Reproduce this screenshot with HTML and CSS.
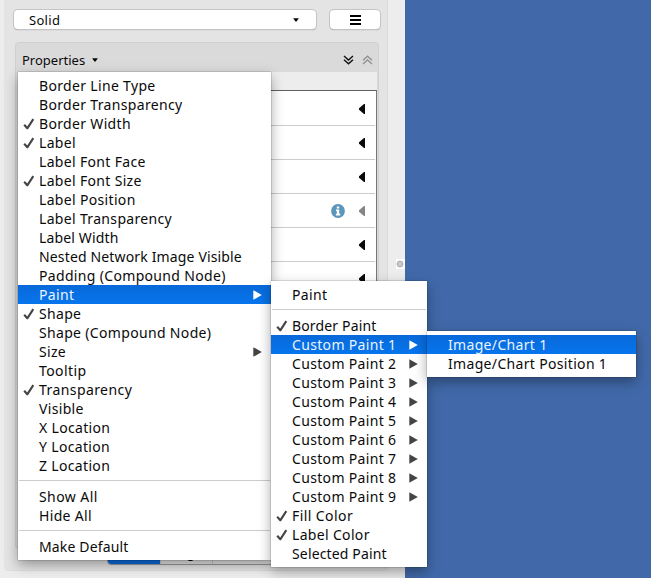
FILE: index.html
```
<!DOCTYPE html>
<html lang="en">
<head>
<meta charset="utf-8">
<title>Style properties</title>
<link rel="stylesheet" href="styles.css">
</head>
<body>
<svg class="defs" width="0" height="0">
  <symbol id="check" viewBox="0 0 12 12"><path d="M1.2 6.8 4.3 10.3 10.3 1.2" fill="none" stroke="currentColor" stroke-width="2.1" stroke-linejoin="round"/></symbol>
  <symbol id="right" viewBox="0 0 9 10"><path d="M.3.2 8.8 5 .3 9.8z" fill="currentColor"/></symbol>
  <symbol id="left" viewBox="0 0 6 10"><path d="M6 0V10H5L0 5.7V4.3L5 0z" fill="currentColor"/></symbol>
  <symbol id="down" viewBox="0 0 6 4"><path d="M.2.2H5.8L3.6 3.6H2.4z" fill="currentColor"/></symbol>
</svg>
<div class="app">
  <div class="side">
    <div class="panel">
      <div class="toolbar">
        <div class="combo"><span>Solid</span><svg width="6" height="4"><use href="#down"/></svg></div>
        <div class="options"><svg width="11" height="10" viewBox="0 0 11 10"><path d="M0 1H11M0 5H11M0 9H11" stroke="#000" stroke-width="2"/></svg></div>
      </div>
      <div class="group">
        <div class="group-head">
          <span>Properties</span><svg width="6" height="4"><use href="#down"/></svg>
          <svg class="expand" width="11" height="10" viewBox="0 0 11 10"><path d="M1 1 5.5 5 10 1M1 4.7 5.5 8.7 10 4.7" fill="none" stroke="#111" stroke-width="1.4"/></svg>
          <svg class="collapse" width="11" height="10" viewBox="0 0 11 10"><path d="M1 5.2 5.5 1.2 10 5.2M1 9 5.5 5 10 9" fill="none" stroke="#929292" stroke-width="1.4"/></svg>
        </div>
        <div class="group-body">
          <div class="list">
            <div class="row"><svg width="6" height="10"><use href="#left"/></svg></div>
            <div class="row"><svg width="6" height="10"><use href="#left"/></svg></div>
            <div class="row"><svg width="6" height="10"><use href="#left"/></svg></div>
            <div class="row off"><svg class="info" width="14" height="14" viewBox="0 0 14 14"><circle cx="7" cy="7" r="6.9" fill="#5b97bb"/><path d="M5.8 2.4H8.2V4.5H5.8zM5 5.6H8.2V9.8H9.2V11.4H4.9V9.8H5.9V7.2H5z" fill="#fff"/></svg><svg width="6" height="10"><use href="#left"/></svg></div>
            <div class="row"><svg width="6" height="10"><use href="#left"/></svg></div>
            <div class="row"><svg width="6" height="10"><use href="#left"/></svg></div>
          </div>
        </div>
      </div>
      <div class="tabs"><span class="on"></span><span class="edge">Edge</span><span></span></div>
    </div>
    <div class="divider"><i></i></div>
  </div>
  <div class="canvas"></div>
</div>

<div class="menu main">
  <div class="item">Border Line Type</div>
  <div class="item">Border Transparency</div>
  <div class="item"><svg class="check"><use href="#check"/></svg>Border Width</div>
  <div class="item"><svg class="check"><use href="#check"/></svg>Label</div>
  <div class="item">Label Font Face</div>
  <div class="item"><svg class="check"><use href="#check"/></svg>Label Font Size</div>
  <div class="item">Label Position</div>
  <div class="item">Label Transparency</div>
  <div class="item snug">Label Width</div>
  <div class="item snug">Nested Network Image Visible</div>
  <div class="item">Padding (Compound Node)</div>
  <div class="item active">Paint<svg class="more"><use href="#right"/></svg></div>
  <div class="item"><svg class="check"><use href="#check"/></svg>Shape</div>
  <div class="item">Shape (Compound Node)</div>
  <div class="item">Size<svg class="more"><use href="#right"/></svg></div>
  <div class="item wide">Tooltip</div>
  <div class="item wide"><svg class="check"><use href="#check"/></svg>Transparency</div>
  <div class="item">Visible</div>
  <div class="item">X Location</div>
  <div class="item">Y Location</div>
  <div class="item">Z Location</div>
  <div class="sep"></div>
  <div class="item wide">Show All</div>
  <div class="item">Hide All</div>
  <div class="sep"></div>
  <div class="item snug">Make Default</div>
</div>

<div class="menu paint">
  <div class="item">Paint</div>
  <div class="sep"></div>
  <div class="item snug"><svg class="check"><use href="#check"/></svg>Border Paint</div>
  <div class="item active">Custom Paint 1<svg class="more"><use href="#right"/></svg></div>
  <div class="item">Custom Paint 2<svg class="more"><use href="#right"/></svg></div>
  <div class="item">Custom Paint 3<svg class="more"><use href="#right"/></svg></div>
  <div class="item">Custom Paint 4<svg class="more"><use href="#right"/></svg></div>
  <div class="item">Custom Paint 5<svg class="more"><use href="#right"/></svg></div>
  <div class="item">Custom Paint 6<svg class="more"><use href="#right"/></svg></div>
  <div class="item">Custom Paint 7<svg class="more"><use href="#right"/></svg></div>
  <div class="item">Custom Paint 8<svg class="more"><use href="#right"/></svg></div>
  <div class="item">Custom Paint 9<svg class="more"><use href="#right"/></svg></div>
  <div class="item wide"><svg class="check"><use href="#check"/></svg>Fill Color</div>
  <div class="item"><svg class="check"><use href="#check"/></svg>Label Color</div>
  <div class="item snug">Selected Paint</div>
</div>

<div class="menu custom">
  <div class="item active">Image/Chart 1</div>
  <div class="item">Image/Chart Position 1</div>
</div>
</body>
</html>
```
FILE: styles.css
```
* { box-sizing: border-box; }
body {
  margin: 0;
  width: 651px;
  height: 578px;
  overflow: hidden;
  position: relative;
  font: 13px/16px "Noto Sans", "Open Sans", sans-serif;
  color: #0a0a0a;
}
svg { display: block; flex: none; }
.defs { position: absolute; }
.app { display: flex; height: 578px; }
.side { display: flex; width: 405px; background: #ededed; padding-left: 4px; }
.canvas { flex: 1; background: #4169a9; }
.panel {
  width: 384px;
  height: 571px;
  padding: 10px 7px 0 9px;
  background: #e4e4e4;
  border-right: 1px solid #dcdcdc;
  border-bottom: 1px solid #dedede;
  border-radius: 0 0 4px 4px;
}
.toolbar { display: flex; gap: 14px; height: 19px; margin-bottom: 13px; }
.combo, .options {
  display: flex;
  flex: none;
  align-items: center;
  background: #fff;
  border-radius: 4px;
  box-shadow: 0 0 0 1px #c4c4c4, 0 1px 1px #888;
}
.combo { width: 302px; margin-left: 1px; padding: 0 17px 0 15px; justify-content: space-between; letter-spacing: .3px; }
.options { width: 50px; justify-content: center; }
.group {
  width: 364px;
  height: 507px;
  margin-left: 2px;
  background: #dadada;
  border: 1px solid #d0d0d0;
  border-radius: 4px;
}
.group-head { display: flex; align-items: center; height: 29px; padding: 5px 5px 0 6px; }
.group-head span { width: 70px; margin-top: -1px; }
.expand { margin-left: auto; }
.collapse { margin-left: 8px; }
.group-body { height: 477px; margin: 0 1px 0 2px; padding-top: 18px; background: #ededed; }
.list {
  height: 459px;
  padding-right: 1px;
  background: #fff;
  border: 1px solid #777;
  border-top: 1px solid #606060;
}
.row {
  display: flex;
  align-items: center;
  justify-content: flex-end;
  gap: 14px;
  height: 34px;
  padding-right: 10.5px;
  border-bottom: 1px solid #ccc;
}
.row:first-child { height: 35px; padding-top: 2px; }
.off { color: #858585; }
.tabs {
  display: flex;
  width: 200px;
  height: 20px;
  margin: -4px 0 0 94px;
  position: relative;
  background: #e6e6e6;
  border: 1px solid #999;
  border-radius: 4px;
  overflow: hidden;
  line-height: 15px;
}
.tabs span { width: 52px; text-align: center; border-right: 1px solid #ccc; }
.tabs .on { width: 54px; background: #0a6ce0; }
.tabs span:last-child { width: 94px; border: 0; }
.divider { width: 17px; display: flex; padding-top: 259px; justify-content: flex-end; }
.divider i {
  width: 9px;
  height: 10px;
  background: radial-gradient(circle at 4px 5px, #c8c8c8 0 2px, #aaa 3px, #fff 3.8px);
}
.menu {
  position: absolute;
  padding: 4px 0;
  background: #fff;
  font-size: 14px;
  line-height: 19px;
  box-shadow: 0 0 1px rgba(0, 0, 0, .65), 0 5px 12px rgba(0, 0, 0, .35);
}
.main { left: 18px; top: 72px; width: 253px; height: 488px; }
.paint { left: 271px; top: 281px; width: 156px; height: 286px; }
.custom { left: 427px; top: 331px; width: 209px; height: 46px; }
.item {
  display: flex;
  align-items: center;
  height: 19px;
  padding: 0 9px 0 21px;
  white-space: nowrap;
  letter-spacing: .33px;
}
.snug { letter-spacing: .15px; }
.wide { letter-spacing: .42px; }
.active { color: #eaf4ff; background: linear-gradient(#0869d9, #0775ed); }
.check { width: 12px; height: 12px; margin: 0 4px 0 -16px; color: #444; }
.more { width: 9px; height: 10px; margin-left: auto; color: #444; }
.active .more { color: #fff; }
.sep { height: 12px; padding: 5px 1px 6px; }
.sep::before { content: ""; display: block; height: 1px; background: #ccc; }
```
